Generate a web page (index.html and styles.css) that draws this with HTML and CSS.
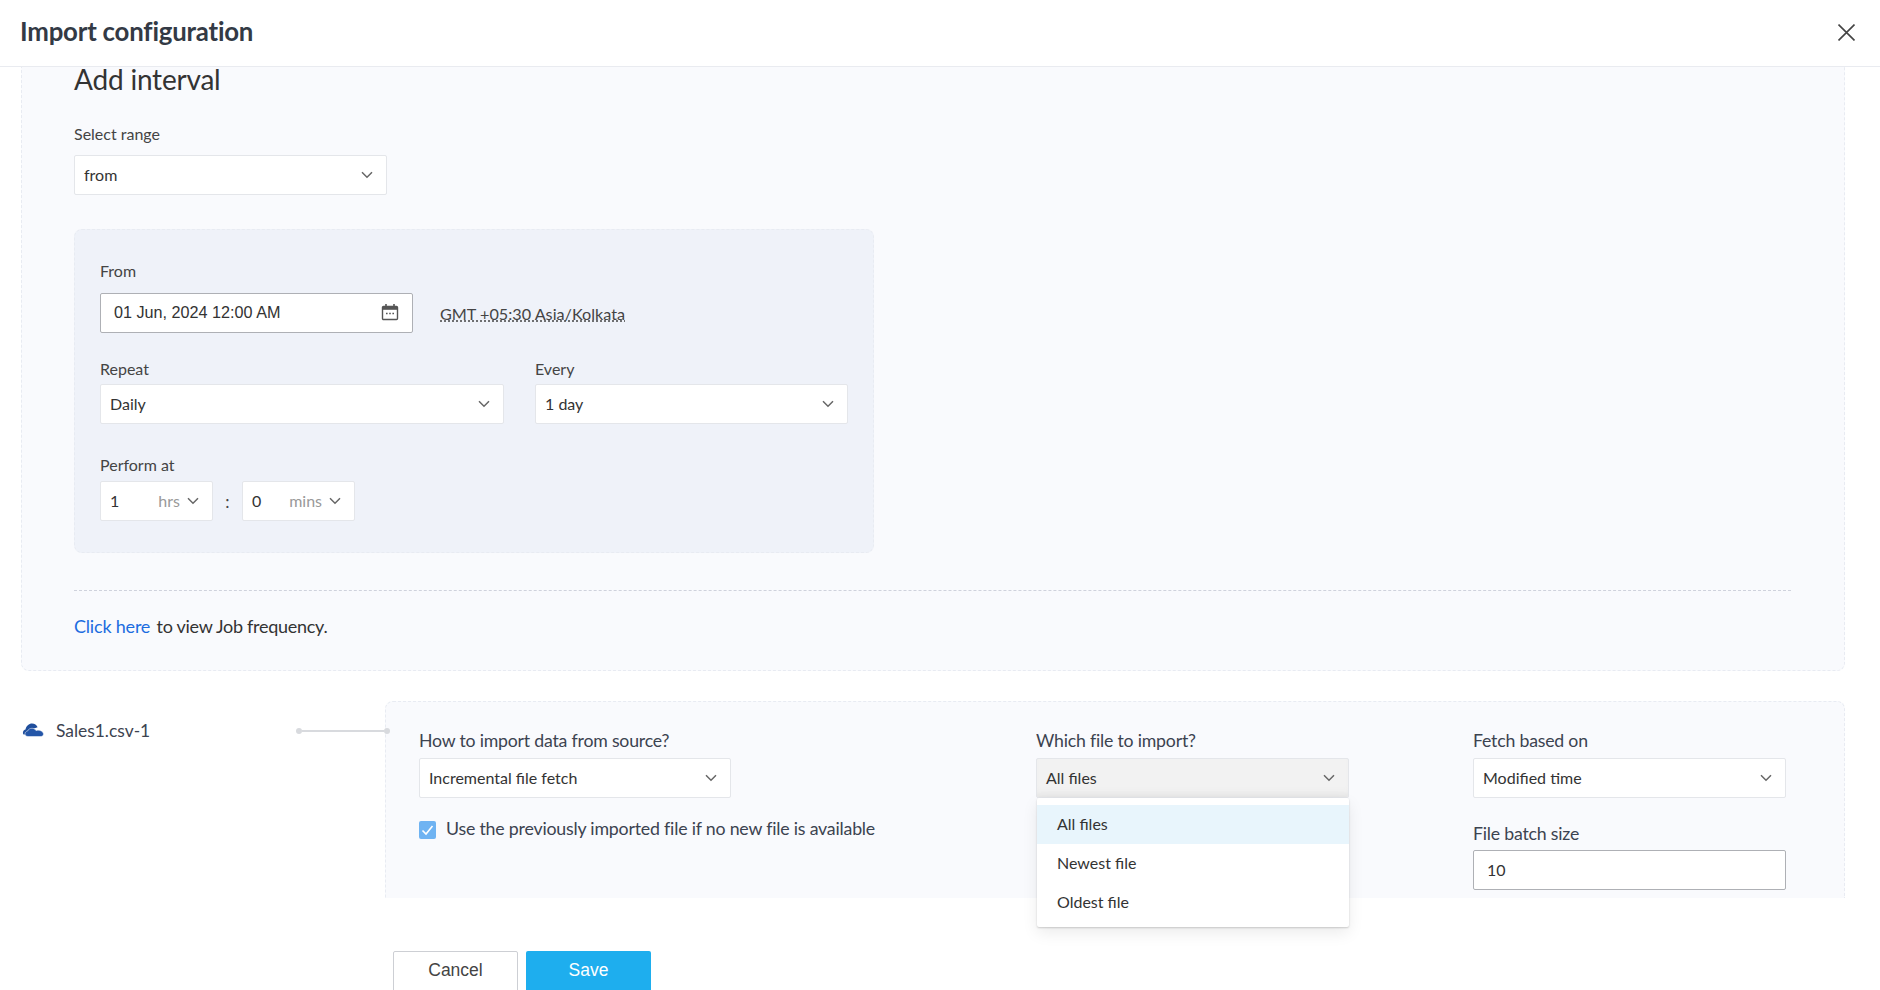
FILE: index.html
```html
<!DOCTYPE html>
<html lang="en">
<head>
<meta charset="utf-8">
<title>Import configuration</title>
<link rel="stylesheet" href="styles.css">
</head>
<body>
<svg class="defs" width="0" height="0" aria-hidden="true">
  <symbol id="chev" viewBox="0 0 12 8"><path d="M1 1.3 6 6.3 11 1.3" fill="none" stroke="#666" stroke-width="1.5"/></symbol>
</svg>
<div class="page">
  <header class="header">
    <h1 class="title">Import configuration</h1>
    <svg class="close" viewBox="0 0 16 16"><path d="M.5.5 15.5 15.5M15.5.5.5 15.5" fill="none" stroke="#444" stroke-width="1.5"/></svg>
  </header>
  <main class="scroll">
    <section class="panel">
      <h2 class="heading">Add interval</h2>
      <label class="label range-label">Select range</label>
      <div class="select range-select"><span>from</span><svg class="chev"><use href="#chev"/></svg></div>
      <div class="box">
        <label class="label">From</label>
        <div class="date-row">
          <div class="date-input">
            <span>01 Jun, 2024 12:00 AM</span>
            <svg class="cal" viewBox="0 0 18 18"><path d="M2.500 3.500h13a1 1 0 0 1 1 1v11a1 1 0 0 1-1 1h-13a1 1 0 0 1-1-1v-11a1 1 0 0 1 1-1Z" fill="none" stroke="#555" stroke-width="1.400"/><path d="M1.500 4h15v2.800h-15z" fill="#555"/><path d="M5 1v3M13 1v3" stroke="#555" stroke-width="1.600"/><path d="M5 10.500h1.600M8.200 10.500h1.600M11.400 10.500h1.600" stroke="#555" stroke-width="1.600"/></svg>
          </div>
          <span class="tz">GMT +05:30 Asia/Kolkata</span>
        </div>
        <div class="two-col">
          <div>
            <label class="label">Repeat</label>
            <div class="select repeat-select"><span>Daily</span><svg class="chev"><use href="#chev"/></svg></div>
          </div>
          <div>
            <label class="label">Every</label>
            <div class="select every-select"><span>1 day</span><svg class="chev"><use href="#chev"/></svg></div>
          </div>
        </div>
        <label class="label perform-label">Perform at</label>
        <div class="time-row">
          <div class="time"><span class="time-val">1</span><span class="unit">hrs</span><svg class="chev"><use href="#chev"/></svg></div>
          <span class="colon">:</span>
          <div class="time"><span class="time-val">0</span><span class="unit">mins</span><svg class="chev"><use href="#chev"/></svg></div>
        </div>
      </div>
      <div class="rule"></div>
      <p class="freq"><a class="link">Click here</a> <span class="freq-text">to view Job frequency.</span></p>
    </section>
    <section class="map-row">
      <div class="source">
        <svg class="cloud" viewBox="0 0 22 14"><path d="M1.500 11.500C.300 9.500 1.200 7 3.500 6.500 4.200 3 7 .5 10 .5c2.600 0 4.800 1.500 5.600 3.800L9 6.500 6.500 11.500Z" fill="#1f4e9c"/><path d="M6 13.500c-2 0-3-1.300-3-2.700 0-1.400 1-2.500 2.500-2.700C6.200 6.300 8 5.300 10 5.300c1.700 0 3.200.9 4 2.300 3.500-1.200 7.500.8 7.500 3.500 0 1.500-1.100 2.400-2.500 2.400Z" fill="#2456a8" stroke="#fff" stroke-width=".5"/></svg>
        <span class="source-name">Sales1.csv-1</span>
        <div class="connector"><i class="dot"></i><i class="wire"></i><i class="dot"></i></div>
      </div>
      <div class="settings">
        <div class="field col-a">
          <label class="field-label">How to import data from source?</label>
          <div class="select"><span>Incremental file fetch</span><svg class="chev"><use href="#chev"/></svg></div>
          <div class="check-row">
            <span class="check"><svg viewBox="0 0 17 18"><path d="M3.500 9.500 7 13 13.500 5" fill="none" stroke="#fff" stroke-width="1.600"/></svg></span>
            <span class="check-text">Use the previously imported file if no new file is available</span>
          </div>
        </div>
        <div class="field col-b">
          <label class="field-label">Which file to import?</label>
          <div class="select open"><span>All files</span><svg class="chev"><use href="#chev"/></svg></div>
          <ul class="menu">
            <li class="item active">All files</li>
            <li class="item">Newest file</li>
            <li class="item">Oldest file</li>
          </ul>
        </div>
        <div class="field col-c">
          <label class="field-label">Fetch based on</label>
          <div class="select"><span>Modified time</span><svg class="chev"><use href="#chev"/></svg></div>
          <label class="field-label batch-label">File batch size</label>
          <div class="batch">10</div>
        </div>
      </div>
    </section>
    <div class="actions">
      <button class="btn cancel">Cancel</button>
      <button class="btn save">Save</button>
    </div>
  </main>
</div>
</body>
</html>
```
FILE: styles.css
```css
* { box-sizing: border-box; }
html, body { margin: 0; height: 100%; background: #fff; }
body { font-family: Lato, "Liberation Sans", sans-serif; color: #333; overflow: hidden; }
.defs { position: absolute; }
.page { height: 990px; overflow: hidden; display: flex; flex-direction: column; }

.header { flex: none; height: 67px; border-bottom: 1px solid #e9ebf0; padding: 0 25px 0 20px; display: flex; align-items: center; justify-content: space-between; }
.title { margin: 0; font-size: 25.800px; font-weight: 700; color: #333a45; letter-spacing: -.2px; position: relative; top: -2px; }
.close { width: 17px; height: 17px; margin-top: -2px; }

.scroll { flex: 1; padding: 0 35px 0 21px; }

.panel { height: 604px; background: #f9fafd; border: 1px dashed #e8ebf2; border-top: 0; border-radius: 0 0 8px 8px; padding: 0 53px 0 52px; }
.heading { margin: 0; height: 33px; font-size: 28px; line-height: 25px; font-weight: 400; color: #333; letter-spacing: -.2px; }
.label { display: block; font-size: 16px; line-height: 20px; color: #444; }
.range-label { margin-top: 24px; }

.select { width: 100%; height: 40px; background: #fff; border: 1px solid #e4e6ea; border-radius: 2px; padding: 0 9px; display: flex; align-items: center; justify-content: space-between; font-size: 16px; color: #333; }
.select span { padding-bottom: 2px; }
.range-select { width: 313px; margin-top: 11px; }
.chev { width: 12px; height: 8px; margin-right: 4px; flex: none; }

.box { width: 800px; height: 324px; margin-top: 34px; background: #eff2f9; border: 1px dashed #e8ebf2; border-radius: 8px; padding: 31px 25px 0; }
.date-row { display: flex; align-items: center; margin-top: 12px; }
.date-input { width: 313px; height: 40px; background: #fff; border: 1px solid #aeb0b5; border-radius: 2px; padding: 0 13px; display: flex; align-items: center; justify-content: space-between; font-family: "Liberation Sans", Arial, sans-serif; font-size: 16.200px; color: #333; }
.date-input span { padding-bottom: 2px; }
.cal { width: 18px; height: 18px; margin-top: -2px; }
.tz { margin-left: 27px; margin-top: 1px; font-size: 16.200px; color: #444; text-decoration: underline dotted #444; text-underline-offset: 1px; }

.two-col { display: grid; grid-template-columns: 404px 313px; column-gap: 31px; margin-top: 26px; }
.two-col .label { margin-bottom: 5px; }
.perform-label { margin-top: 31px; }
.time-row { display: flex; align-items: center; margin-top: 6px; }
.time { width: 113px; height: 40px; background: #fff; border: 1px solid #e4e6ea; border-radius: 2px; padding: 0 9px; display: flex; align-items: center; font-size: 16px; }
.time-val { flex: 1; padding-bottom: 2px; }
.unit { color: #999; margin-right: 7px; padding-bottom: 2px; }
.colon { width: 29px; text-align: center; font-size: 17px; font-weight: 400; color: #444; }

.rule { margin-top: 37px; border-top: 1px dashed #cfd2dc; }
.freq { margin: 24px 0 0; font-size: 18px; line-height: 22px; letter-spacing: -.2px; }
.link { color: #1c6ce0; }
.freq-text { color: #333; margin-left: 2px; letter-spacing: -.28px; }

.map-row { display: flex; margin-top: 30px; height: 197px; }
.source { width: 364px; flex: none; display: flex; align-items: center; height: 59px; position: relative; }
.cloud { width: 22px; height: 14px; margin-left: 1px; margin-top: -1px; }
.source-name { margin-left: 12px; font-size: 17.400px; color: #3c4350; }
.connector { position: absolute; left: 275px; top: 27px; width: 94px; display: flex; align-items: center; }
.dot { width: 6px; height: 6px; border-radius: 50%; background: #d8dade; flex: none; }
.wire { flex: 1; height: 2px; background: #d8dade; }

.settings { flex: 1; display: grid; grid-template-columns: 617px 437px 313px; padding: 28px 0 0 33px; background: #f9fafd; border: 1px dashed #e8ebf2; border-bottom: 0; border-radius: 8px 8px 0 0; }
.field { position: relative; }
.field-label { display: block; font-size: 17.700px; line-height: 22px; letter-spacing: -.2px; color: #3c4350; margin-bottom: 6px; }
.col-a .select { width: 312px; }
.col-b .select { width: 313px; }
.select.open { background: #f2f2f2; box-shadow: inset 0 -8px 8px -6px #e2e2e2; }

.check-row { display: flex; align-items: center; margin-top: 19px; }
.check { width: 17px; height: 18px; background: #6fb3f2; border-radius: 2px; display: flex; }
.check svg { width: 17px; height: 18px; }
.check-text { margin-left: 10px; padding-bottom: 3px; font-size: 17.750px; letter-spacing: -.2px; color: #3c4350; white-space: nowrap; }

.menu { list-style: none; position: absolute; top: 68px; left: 1px; z-index: 2; width: 312px; height: 129px; margin: 0; padding: 7px 0 0; background: #fff; border-radius: 2px; box-shadow: 0 1px 2px rgba(0,0,0,.18), 0 6px 16px rgba(0,0,0,.08); }
.item { height: 39px; padding: 0 0 2px 20px; display: flex; align-items: center; font-size: 16px; color: #333; }
.item.active { background: #e8f5fc; }

.field-label.batch-label { margin-top: 25px; margin-bottom: 5px; }
.batch { height: 40px; background: #fff; border: 1px solid #aeb0b5; border-radius: 2px; padding: 0 13px 2px; display: flex; align-items: center; font-size: 16px; color: #333; }

.actions { display: flex; gap: 8px; margin: 53px 0 0 372px; }
.btn { width: 125px; height: 50px; border-radius: 2px; font-family: "Liberation Sans", Arial, sans-serif; font-size: 17.500px; padding: 0 0 11px; }
.cancel { background: #fff; border: 1px solid #cdcfd4; color: #444; }
.save { background: #1eaeee; border: 0; color: #fff; }
```
